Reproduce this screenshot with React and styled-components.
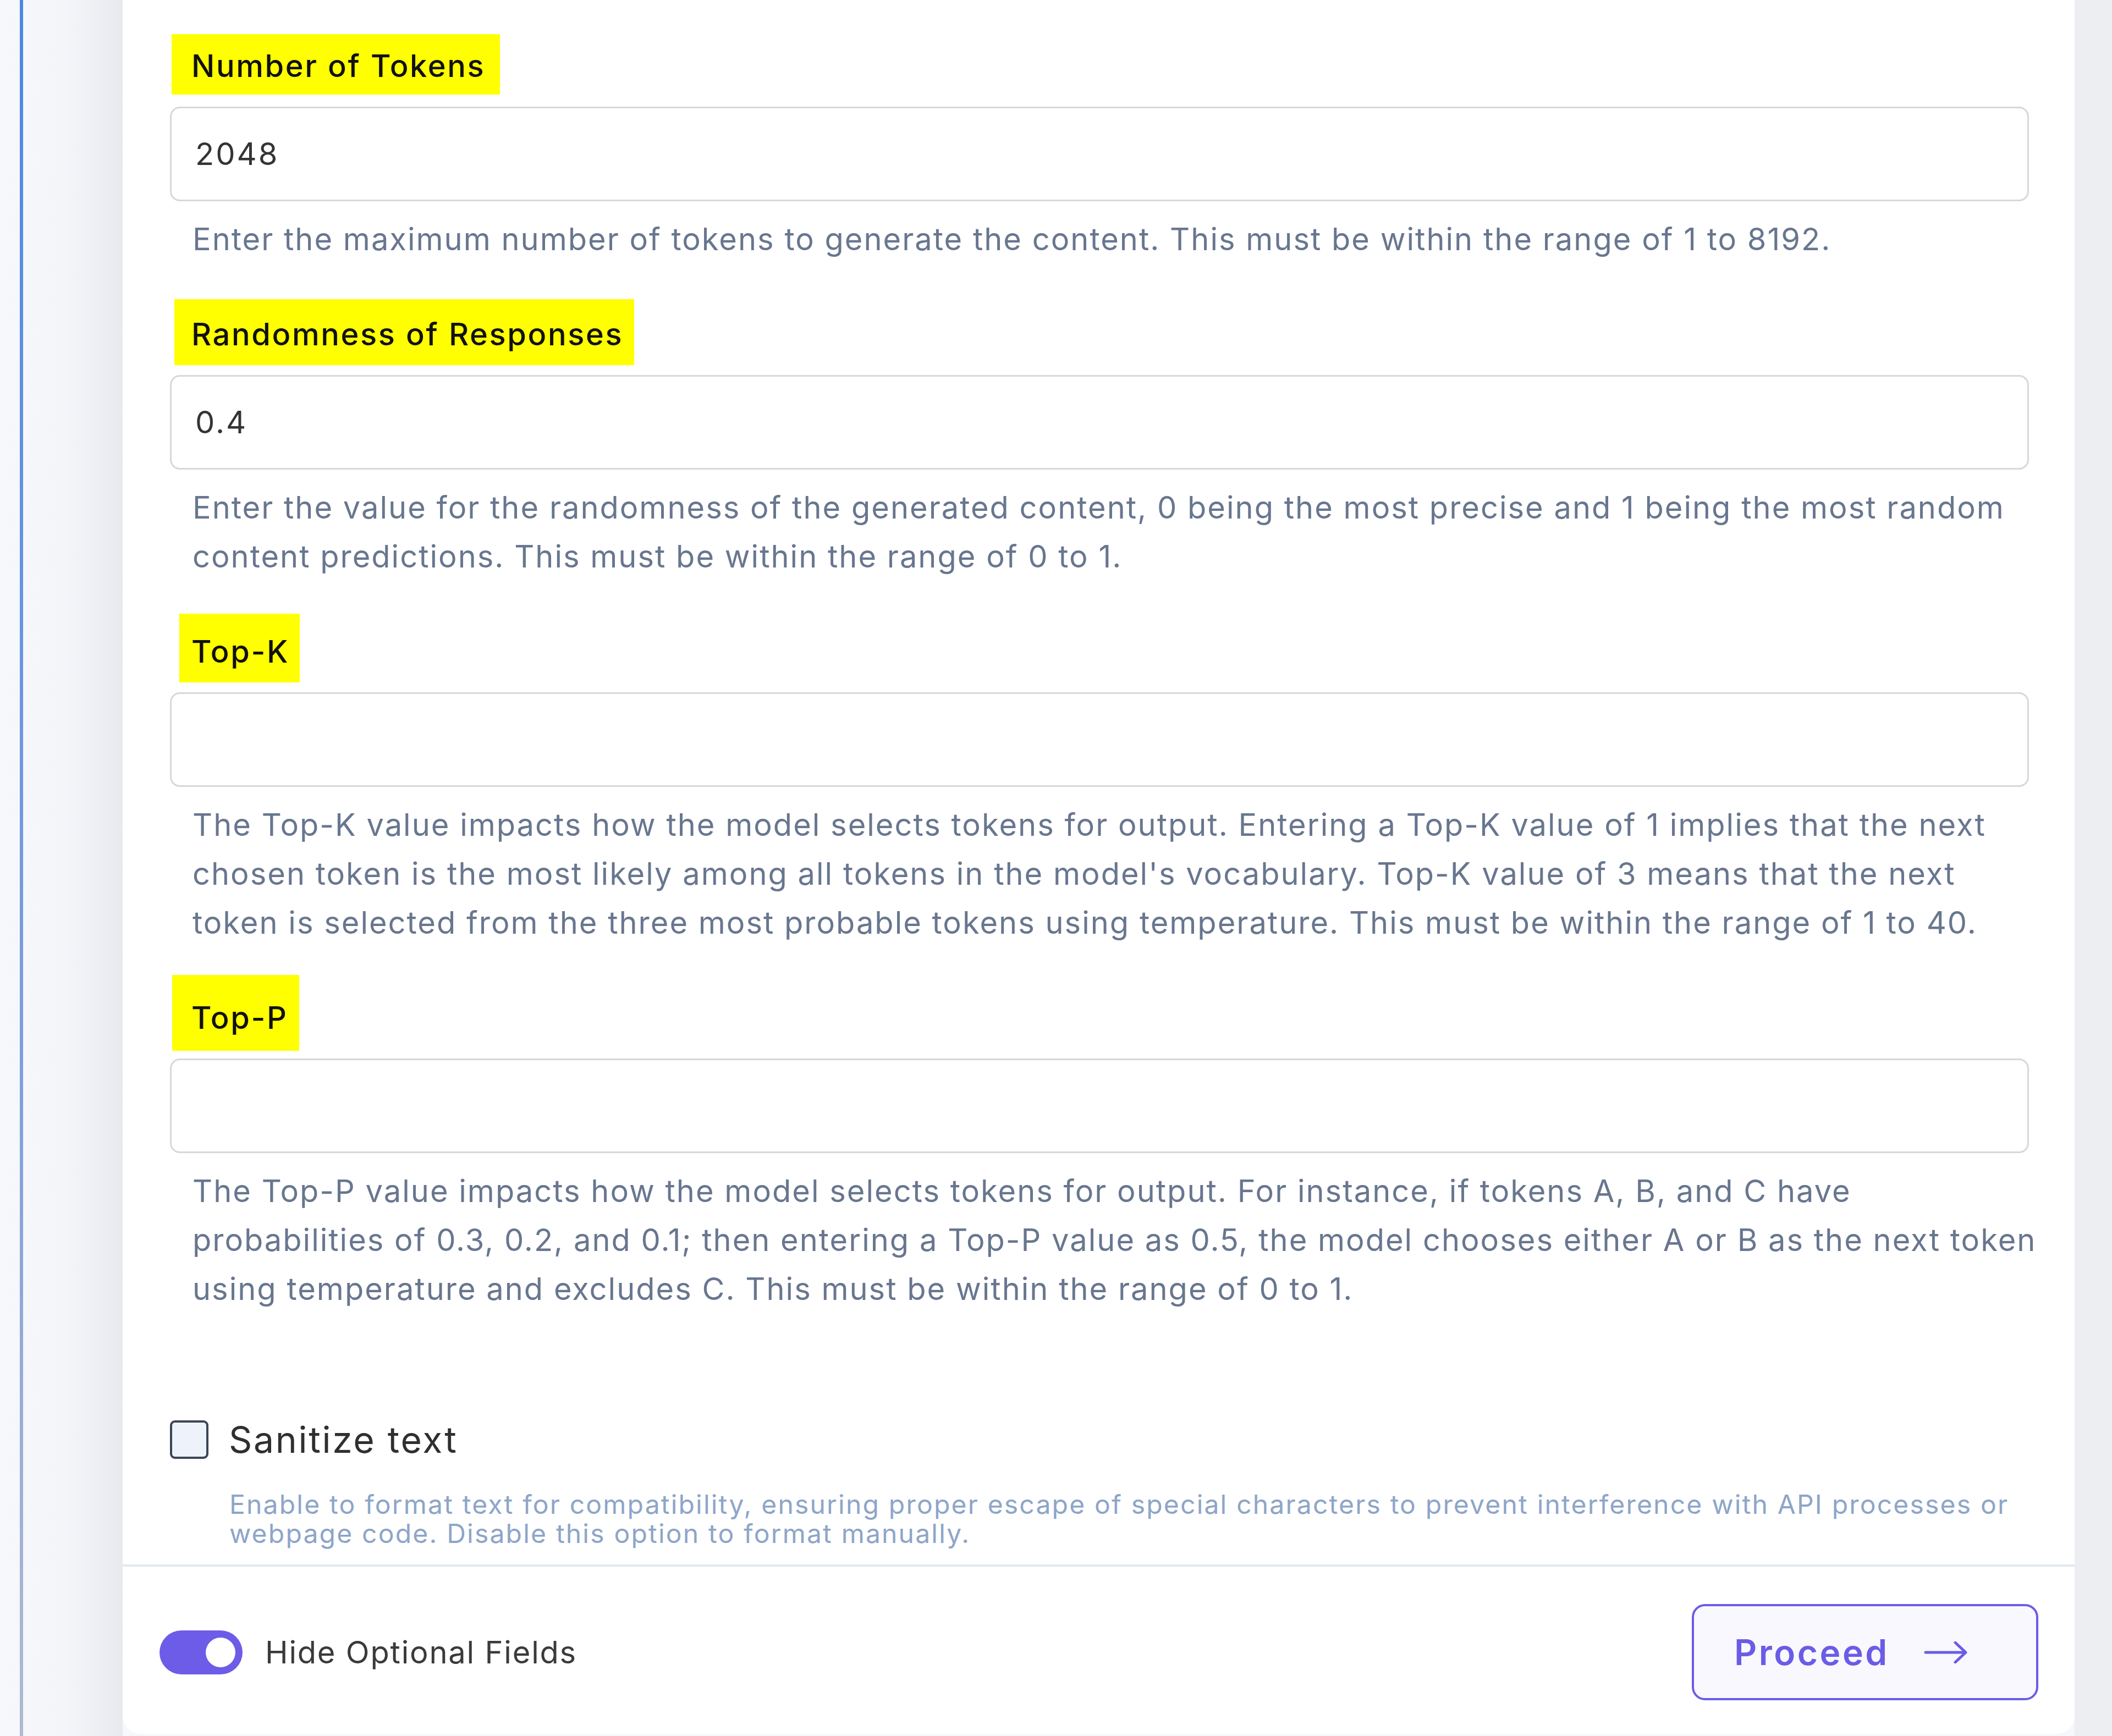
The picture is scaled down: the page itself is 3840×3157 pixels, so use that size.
import React from 'react';
import styled, { createGlobalStyle } from 'styled-components';

const GlobalStyle = createGlobalStyle`
  * {
    box-sizing: border-box;
  }
  html, body {
    margin: 0;
    padding: 0;
  }
  body {
    background: #f5f7fb;
    font-family: Inter, "Liberation Sans", sans-serif;
  }
`;

const Page = styled.div`
  display: flex;
  height: 3157px;
  overflow: hidden;
`;

const Rail = styled.aside`
  width: 223px;
  flex-shrink: 0;
  padding-left: 36px;
  background: linear-gradient(to right, #f6f8fc 0%, #f3f5f9 55%, #e7e9ee 100%);
`;

const RailLine = styled.div`
  width: 6px;
  height: 100%;
  background: linear-gradient(to bottom, #4d86e5 0%, #7c9edd 60%, #b1b9d1 100%);
`;

const Card = styled.main`
  flex: 1;
  min-width: 0;
  display: flex;
  flex-direction: column;
  background: #fff;
  border-radius: 0 0 32px 32px;
  margin-bottom: 4px;
`;

const Gutter = styled.div`
  width: 68px;
  flex-shrink: 0;
  background: #eceef2;
`;

const Body = styled.div`
  flex: 1;
  min-width: 0;
  padding: 86px 83px 0 86px;
`;

const Field = styled.section`
  margin-bottom: 94px;
`;

const Label = styled.div`
  padding-left: 39px;
  margin-bottom: 40px;
  font-size: 56px;
  font-weight: 500;
  letter-spacing: 2.6px;
  line-height: 68px;
  color: #111;
`;

const Mark = styled.span`
  background: #ffff00;
  padding: ${p => p.$pad.join('px ')}px;
  margin-left: -${p => p.$pad[3]}px;
`;

const Input = styled.input`
  display: block;
  width: 100%;
  height: 172px;
  padding: 0 43px;
  border: 3px solid #d5d8dd;
  border-radius: 18px;
  background: #fff;
  font-family: inherit;
  font-size: 56px;
  letter-spacing: 3px;
  color: #343434;
  outline: none;
`;

const Help = styled.p`
  margin: 25px 0 0;
  padding-left: 41px;
  font-size: 56px;
  letter-spacing: 2px;
  line-height: 89px;
  color: #68768f;
`;

const Line = styled.span`
  display: block;
  white-space: nowrap;
`;

const CheckRow = styled.label`
  display: flex;
  align-items: center;
  gap: 37px;
  height: 80px;
  margin-top: 189px;
`;

const CheckBox = styled.span`
  width: 70px;
  height: 70px;
  border: 4px solid #3b4556;
  border-radius: 9px;
  background: #eef2fa;
`;

const CheckText = styled.span`
  font-size: 66px;
  letter-spacing: 2.7px;
  line-height: 80px;
  color: #2f2f2f;
`;

const Desc = styled.p`
  margin: 51px 0 0;
  padding-left: 108px;
  font-size: 48px;
  letter-spacing: 2.2px;
  line-height: 53px;
  color: #8da5c8;
`;

const Footer = styled.footer`
  display: flex;
  align-items: center;
  justify-content: space-between;
  padding: 68px 66px 61px 67px;
  border-top: 4px solid #e3e8ef;
`;

const ToggleRow = styled.div`
  display: flex;
  align-items: center;
  gap: 41px;
`;

const Switch = styled.span`
  display: flex;
  align-items: center;
  justify-content: ${p => (p.$on ? 'flex-end' : 'flex-start')};
  width: 151px;
  height: 80px;
  padding: 0 13px;
  border-radius: 40px;
  background: ${p => (p.$on ? '#6c5ce7' : '#cbd2dc')};
`;

const Knob = styled.span`
  width: 54px;
  height: 54px;
  border-radius: 50%;
  background: #fff;
`;

const ToggleText = styled.span`
  font-size: 56px;
  letter-spacing: 1.8px;
  color: #3a3a3a;
`;

const ProceedButton = styled.button`
  display: flex;
  align-items: center;
  gap: 63px;
  width: 630px;
  height: 175px;
  padding: 0 0 0 73px;
  border: 4px solid #6c5ce7;
  border-radius: 24px;
  background: #f8f8fe;
  color: #6b5ce6;
  font-family: inherit;
  font-size: 64px;
  font-weight: 600;
  letter-spacing: 3.5px;
  cursor: pointer;
`;

const fields = [
  {
    label: 'Number of Tokens',
    value: '2048',
    pad: [24, 27, 18, 36],
    help: ['Enter the maximum number of tokens to generate the content. This must be within the range of 1 to 8192.'],
  },
  {
    label: 'Randomness of Responses',
    value: '0.4',
    pad: [30, 20, 22, 31],
    help: [
      'Enter the value for the randomness of the generated content, 0 being the most precise and 1 being the most random',
      'content predictions. This must be within the range of 0 to 1.',
    ],
  },
  {
    label: 'Top-K',
    value: '',
    pad: [35, 19, 22, 22],
    help: [
      'The Top-K value impacts how the model selects tokens for output. Entering a Top-K value of 1 implies that the next',
      "chosen token is the most likely among all tokens in the model's vocabulary. Top-K value of 3 means that the next",
      'token is selected from the three most probable tokens using temperature. This must be within the range of 1 to 40.',
    ],
  },
  {
    label: 'Top-P',
    value: '',
    pad: [44, 21, 26, 35],
    help: [
      'The Top-P value impacts how the model selects tokens for output. For instance, if tokens A, B, and C have',
      'probabilities of 0.3, 0.2, and 0.1; then entering a Top-P value as 0.5, the model chooses either A or B as the next token',
      'using temperature and excludes C. This must be within the range of 0 to 1.',
    ],
  },
];

const Arrow = () => (
  <svg width="80" height="40" viewBox="0 0 80 40" fill="none">
    <path d="M3 20H76M57 2L76 20L57 38" stroke="currentColor" strokeWidth="5" strokeLinecap="round" strokeLinejoin="round" />
  </svg>
);

const App = () => {
  return (
    <Page>
      <GlobalStyle />
      <Rail>
        <RailLine />
      </Rail>
      <Card>
        <Body>
          {fields.map(f => (
            <Field key={f.label}>
              <Label>
                <Mark $pad={f.pad}>{f.label}</Mark>
              </Label>
              <Input defaultValue={f.value} />
              <Help>
                {f.help.map(l => (
                  <Line key={l}>{l}</Line>
                ))}
              </Help>
            </Field>
          ))}
          <CheckRow>
            <CheckBox />
            <CheckText>Sanitize text</CheckText>
          </CheckRow>
          <Desc>
            <Line>Enable to format text for compatibility, ensuring proper escape of special characters to prevent interference with API processes or</Line>
            <Line>webpage code. Disable this option to format manually.</Line>
          </Desc>
        </Body>
        <Footer>
          <ToggleRow>
            <Switch $on>
              <Knob />
            </Switch>
            <ToggleText>Hide Optional Fields</ToggleText>
          </ToggleRow>
          <ProceedButton>
            Proceed
            <Arrow />
          </ProceedButton>
        </Footer>
      </Card>
      <Gutter />
    </Page>
  );
};

export default App;
